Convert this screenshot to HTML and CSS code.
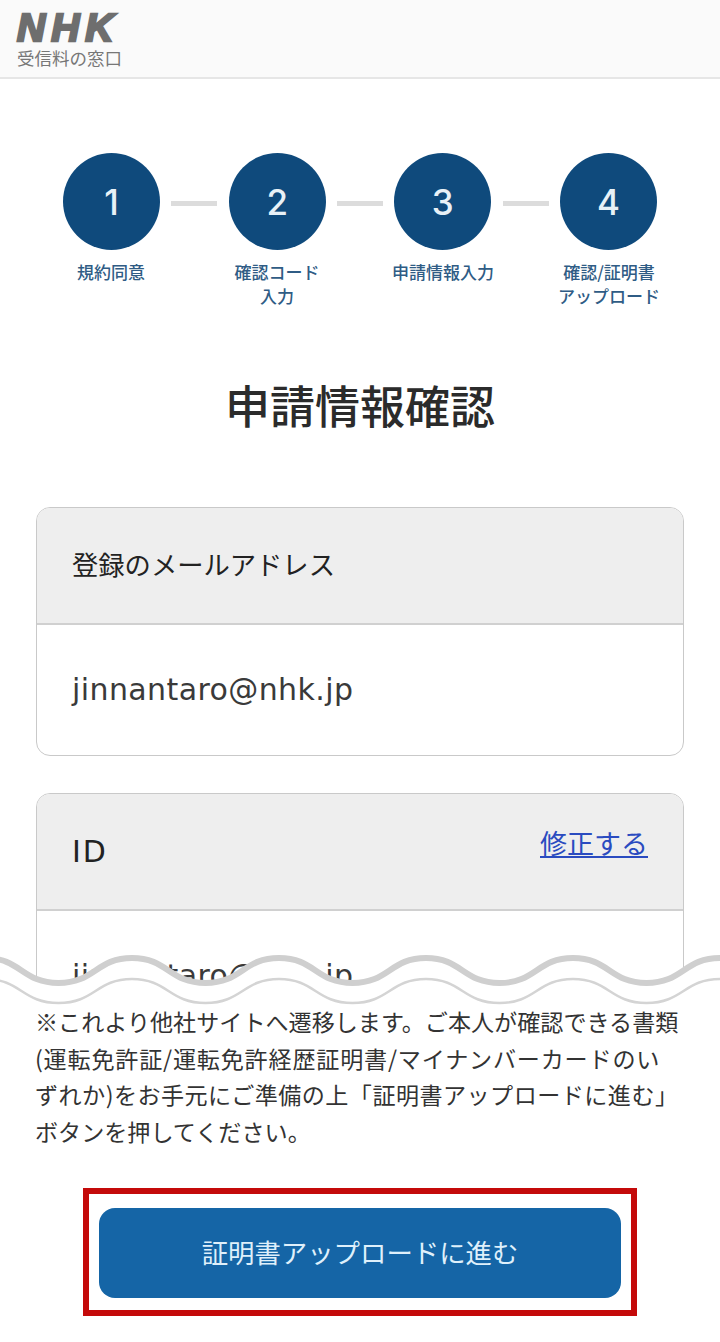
FILE: index.html
```html
<!DOCTYPE html>
<html lang="ja">
<head>
<meta charset="utf-8">
<title>申請情報確認</title>
<link rel="stylesheet" href="styles.css">
</head>
<body>
<div class="page">
  <header class="site-header">
    <div class="logo">NHK</div>
    <div class="logo-sub">受信料の窓口</div>
  </header>
  <div class="stepper">
    <span class="circle">1</span><span class="connector"></span>
    <span class="circle">2</span><span class="connector"></span>
    <span class="circle">3</span><span class="connector"></span>
    <span class="circle">4</span>
  </div>
  <div class="step-labels">
    <div>規約同意</div>
    <div>確認コード<br>入力</div>
    <div>申請情報入力</div>
    <div>確認/証明書<br>アップロード</div>
  </div>
  <h1 class="title">申請情報確認</h1>
  <section class="card">
    <div class="card-head"><span>登録のメールアドレス</span></div>
    <div class="card-body">jinnantaro@nhk.jp</div>
  </section>
  <section class="card">
    <div class="card-head"><span class="card-id">ID</span><a class="edit" href="#">修正する</a></div>
    <div class="card-body">jinnantaro@nhk.jp</div>
  </section>
  <div class="overlay">
    <svg class="wave" viewBox="0 0 720 60" width="720" height="60" aria-hidden="true">
      <path class="wave-fill" d="M-15,7 C21,7 22,32 58.500,32 S96,7 132,7 S169,32 205.500,32 S243,7 279,7 S316,32 352.500,32 S390,7 426,7 S463,32 499.500,32 S537,7 573,7 S610,32 646.500,32 S684,7 720,7 S757,32 793,32 V60 H-15 Z"/>
      <path class="wave-thick" d="M-15,7 C21,7 22,32 58.500,32 S96,7 132,7 S169,32 205.500,32 S243,7 279,7 S316,32 352.500,32 S390,7 426,7 S463,32 499.500,32 S537,7 573,7 S610,32 646.500,32 S684,7 720,7 S757,32 793,32"/>
      <path class="wave-thin" d="M-15,28 C21,28 22,52 58.500,52 S96,28 132,28 S169,52 205.500,52 S243,28 279,28 S316,52 352.500,52 S390,28 426,28 S463,52 499.500,52 S537,28 573,28 S610,52 646.500,52 S684,28 720,28 S757,52 793,52"/>
    </svg>
    <div class="overlay-body">
      <p class="note">※これより他社サイトへ遷移します。ご本人が確認できる書類<br><span class="note-wide">(運転免許証/運転免許経歴証明書/マイナンバーカードのい</span><br><span class="note-mid">ずれか)をお手元にご準備の上「証明書アップロードに進む」</span><br>ボタンを押してください。</p>
      <div class="highlight">
        <button class="cta" type="button">証明書アップロードに進む</button>
      </div>
    </div>
  </div>
</div>
</body>
</html>
```
FILE: styles.css
```css
* { box-sizing: border-box; }
html, body { margin: 0; padding: 0; background: #fff; }
body {
  font-family: "DejaVu Sans", "Noto Sans CJK JP", sans-serif;
  color: #333;
}
.page {
  position: relative;
  width: 720px;
  height: 1342px;
  overflow: hidden;
  background: #fff;
}
.site-header {
  height: 79px;
  padding: 10px 0 0 17px;
  background: #fafafa;
  border-bottom: 2px solid #e6e6e6;
}
.logo {
  font-family: "Liberation Sans", sans-serif;
  font-weight: 700;
  font-style: italic;
  font-size: 39px;
  line-height: 36px;
  letter-spacing: 6px;
  color: #6e6e6e;
  -webkit-text-stroke: 2.500px #6e6e6e;
}
.logo-sub {
  margin-top: 1px;
  font-family: "Noto Sans CJK JP", sans-serif;
  font-size: 17.500px;
  line-height: 22px;
  color: #777;
}
.stepper {
  display: flex;
  justify-content: center;
  align-items: center;
  gap: 11.330px;
  margin-top: 74px;
}
.circle {
  display: flex;
  justify-content: center;
  align-items: center;
  flex: none;
  width: 97px;
  height: 97px;
  border-radius: 50%;
  background: #0f4a7c;
  color: #e8f1f7;
  font-family: "Inter", sans-serif;
  font-size: 35px;
  font-weight: 500;
}
.connector {
  flex: none;
  width: 46px;
  height: 5px;
  margin-top: 3px;
  background: #dcdcdc;
}
.step-labels {
  display: grid;
  grid-template-columns: repeat(4, 166px);
  justify-content: center;
  margin-top: 10px;
  font-family: "Noto Sans CJK JP", sans-serif;
  font-size: 17px;
  font-weight: 500;
  line-height: 24px;
  text-align: center;
  color: #2f5c85;
}
.title {
  margin: 62px 0 0;
  font-family: "Noto Sans CJK JP", sans-serif;
  font-size: 45px;
  font-weight: 500;
  line-height: 70px;
  text-align: center;
  color: #2b2b2b;
}
.card {
  margin: 67px 36px 0;
  border: 1px solid #c9c9c9;
  border-radius: 14px;
  overflow: hidden;
}
.card + .card { margin-top: 37px; }
.card-head {
  display: flex;
  justify-content: space-between;
  align-items: flex-start;
  height: 117px;
  padding: 37px 35px 0;
  background: #eeeeee;
  border-bottom: 2px solid #d0d0d0;
  font-family: "Noto Sans CJK JP", sans-serif;
  font-size: 26.300px;
  line-height: 38px;
  color: #222;
}
.card-id {
  margin-top: 2px;
  font-family: "DejaVu Sans", sans-serif;
  font-size: 30px;
  letter-spacing: 2px;
}
.edit {
  margin-top: -7px;
  color: #2a4bc0;
  font-size: 27px;
}
.card-body {
  height: 130px;
  padding: 45px 35px 0;
  font-size: 30px;
  letter-spacing: 0.400px;
  line-height: 40px;
  color: #3a3a3a;
}
.overlay {
  position: absolute;
  left: 0;
  right: 0;
  bottom: 0;
}
.wave {
  position: relative;
  z-index: 1;
  display: block;
  margin-bottom: -8px;
}
.wave-fill { fill: #fff; }
.wave-thick { fill: none; stroke: #cfcfcf; stroke-width: 6; }
.wave-thin { fill: none; stroke: #d4d4d4; stroke-width: 2.500; }
.overlay-body {
  padding: 0 0 26px;
  background: #fff;
}
.note {
  position: relative;
  z-index: 2;
  margin: -1px 0 0;
  padding: 0 35px;
  font-family: "Noto Sans CJK JP", sans-serif;
  font-size: 23.100px;
  line-height: 36.500px;
  white-space: nowrap;
  color: #333;
}
.note-wide { letter-spacing: 0.800px; }
.note-mid { letter-spacing: 0.450px; }
.highlight {
  width: 554px;
  height: 128px;
  margin: 39px auto 0;
  padding: 14px 10px 12px;
  border: 6px solid #c40a0a;
}
.cta {
  display: block;
  width: 100%;
  height: 90px;
  padding: 0 0 4px;
  border: 0;
  border-radius: 16px;
  background: #1565a6;
  color: #dff0fb;
  font-family: "Noto Sans CJK JP", sans-serif;
  font-size: 26.400px;
}
```
